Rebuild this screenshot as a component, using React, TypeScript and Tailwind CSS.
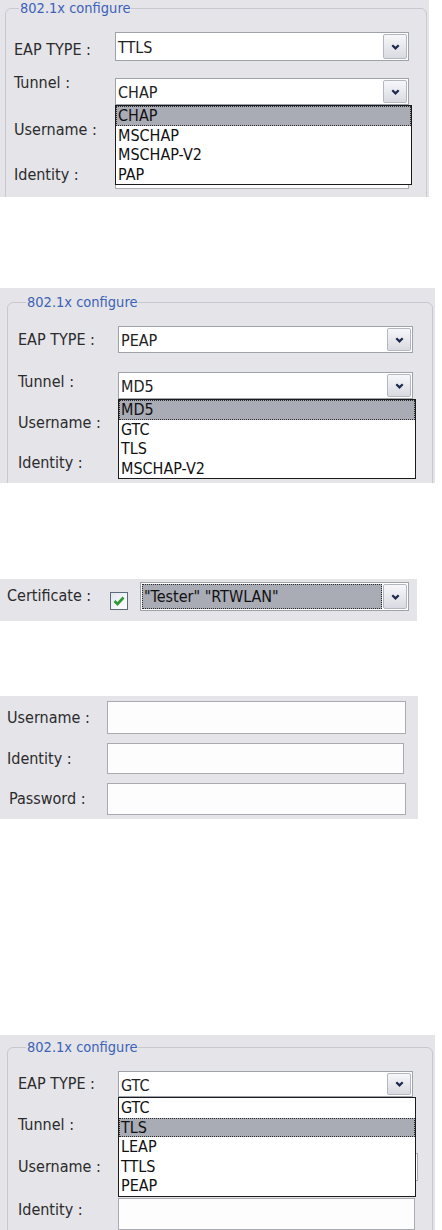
import React from "react";

const FONT = "font-['DejaVu_Sans','Liberation_Sans',sans-serif] font-stretch-condensed";

function Chevron() {
  return (
    <svg width="9" height="6" viewBox="0 0 9 6">
      <path d="M1.3 1.2 L4.5 4.4 L7.7 1.2" fill="none" stroke="#1d2a4d" strokeWidth="2.2" />
    </svg>
  );
}

function ArrowBtn() {
  return (
    <div className="w-[24px] shrink-0 my-[1px] mr-[1px] border border-[#b3b7bf] rounded-[2px] bg-linear-to-b from-[#f7f7fa] to-[#d9dbe2] flex items-center justify-center">
      <Chevron />
    </div>
  );
}

function Item({ label, hl }: { label: string; hl?: boolean }) {
  return (
    <div
      className={
        hl
          ? "h-[19.5px] leading-[18px] pl-[1px] text-[16px] text-[#111] bg-[#a9abb5] border border-dotted border-[#2a2a2a]"
          : "h-[19.5px] leading-[20px] pl-[2px] text-[16px] text-[#111]"
      }
    >
      {label}
    </div>
  );
}

function Select({
  value,
  cls,
  items,
  hlIndex,
}: {
  value: string;
  cls: string;
  items?: string[];
  hlIndex?: number;
}) {
  return (
    <div className={"relative flex border border-[#9ea3ab] bg-white " + cls}>
      <div className="flex-1 flex items-center pl-[2px] pt-[3px] text-[16px] text-[#222]">{value}</div>
      <ArrowBtn />
      {items && (
        <div className="absolute left-[-1px] top-full mt-[1px] w-[calc(100%+5px)] border border-[#1b1b1b] bg-white z-10">
          {items.map((it, i) => (
            <Item key={it} label={it} hl={i === hlIndex} />
          ))}
        </div>
      )}
    </div>
  );
}

function Input({ cls }: { cls: string }) {
  return <div className={"border border-[#a9abb1] bg-[#fdfdfd] " + cls} />;
}

function Label({ text, cls }: { text: string; cls: string }) {
  return <div className={"text-[16px] text-[#2b2b2b] whitespace-nowrap " + cls}>{text}</div>;
}

function Legend({ cls }: { cls: string }) {
  return (
    <legend className={"px-[1px] text-[14.5px] leading-[17px] text-[#3d62b8] " + cls}>802.1x configure</legend>
  );
}

export default function App() {
  return (
    <div className={"w-[442px] min-h-[1230px] bg-white flex flex-col " + FONT}>
      {/* Panel 1 */}
      <div className="w-[429px] h-[197px] bg-[#e4e4e9] overflow-hidden pl-[5px]">
        <fieldset className="w-[422px] h-[240px] border border-[#c8c9d0] rounded-[6px] pl-[8px]">
          <Legend cls="ml-[5px]" />
          <div className="flex items-center mt-[15px] h-[29px]">
            <Label text="EAP TYPE :" cls="w-[101px] mt-[7px]" />
            <Select value="TTLS" cls="w-[294px] h-[29px]" />
          </div>
          <div className="flex items-center mt-[17px] h-[27px]">
            <Label text="Tunnel :" cls="w-[101px] mb-[17px]" />
            <Select
              value="CHAP"
              cls="w-[294px] h-[27px]"
              items={["CHAP", "MSCHAP", "MSCHAP-V2", "PAP"]}
              hlIndex={0}
            />
          </div>
          <div className="flex items-center mt-[13px] h-[29px]">
            <Label text="Username :" cls="w-[101px] mb-[5px]" />
            <Input cls="w-[294px] h-[29px]" />
          </div>
          <div className="flex items-center mt-[14px] h-[28px]">
            <Label text="Identity :" cls="w-[101px]" />
            <Input cls="w-[294px] h-[28px]" />
          </div>
        </fieldset>
      </div>

      {/* Panel 2 */}
      <div className="mt-[91px] w-[435px] h-[195px] bg-[#e4e4e9] overflow-hidden pl-[7px] pt-[6px]">
        <fieldset className="w-[426px] h-[240px] border border-[#c8c9d0] rounded-[6px] pl-[10px]">
          <Legend cls="ml-[8px]" />
          <div className="flex items-center mt-[15px] h-[27px]">
            <Label text="EAP TYPE :" cls="w-[100px]" />
            <Select value="PEAP" cls="w-[295px] h-[27px]" />
          </div>
          <div className="flex items-center mt-[19px] h-[27px]">
            <Label text="Tunnel :" cls="w-[100px] mb-[7px]" />
            <Select
              value="MD5"
              cls="w-[295px] h-[27px]"
              items={["MD5", "GTC", "TLS", "MSCHAP-V2"]}
              hlIndex={0}
            />
          </div>
          <div className="flex items-center mt-[10px] h-[28px]">
            <Label text="Username :" cls="w-[100px]" />
            <Input cls="w-[295px] h-[28px]" />
          </div>
          <div className="flex items-center mt-[12px] h-[28px]">
            <Label text="Identity :" cls="w-[100px]" />
            <Input cls="w-[295px] h-[28px]" />
          </div>
        </fieldset>
      </div>

      {/* Panel 3: certificate */}
      <div className="mt-[96px] w-[417px] h-[42px] bg-[#e4e4e9] flex items-start pl-[7px]">
        <Label text="Certificate :" cls="w-[103px] mt-[5px]" />
        <div className="mt-[13px] w-[18px] h-[18px] border border-[#5d6a7e] bg-linear-to-br from-[#e3e8ee] to-[#ffffff] flex items-center justify-center">
          <svg width="12" height="10" viewBox="0 0 12 10">
            <path d="M1.5 5 L4.5 8 L10.5 1.5" fill="none" stroke="#2f9a35" strokeWidth="2.6" />
          </svg>
        </div>
        <div className="ml-[12px] mt-[3px] w-[269px] h-[29px] flex border border-[#9ea3ab] bg-white">
          <div className="flex-1 m-[1px] bg-[#a9abb5] border border-dotted border-[#2a2a2a] flex items-center pl-[1px] text-[16px] text-[#111]">
            "Tester" "RTWLAN"
          </div>
          <ArrowBtn />
        </div>
      </div>

      {/* Panel 4 */}
      <div className="mt-[75px] w-[418px] h-[123px] bg-[#e4e4e9] flex flex-col">
        <div className="flex items-center mt-[5px] h-[33px]">
          <Label text="Username :" cls="w-[107px] pl-[7px]" />
          <Input cls="w-[299px] h-[33px]" />
        </div>
        <div className="flex items-center mt-[9px] h-[31px]">
          <Label text="Identity :" cls="w-[107px] pl-[7px]" />
          <Input cls="w-[297px] h-[31px]" />
        </div>
        <div className="flex items-center mt-[9px] h-[32px]">
          <Label text="Password :" cls="w-[107px] pl-[9px]" />
          <Input cls="w-[299px] h-[32px]" />
        </div>
      </div>

      {/* Panel 5 */}
      <div className="mt-[216px] w-[435px] h-[195px] bg-[#e4e4e9] overflow-hidden pl-[7px] pt-[4px]">
        <fieldset className="w-[426px] h-[240px] border border-[#c8c9d0] rounded-[6px] pl-[10px]">
          <Legend cls="ml-[8px]" />
          <div className="flex items-center mt-[15px] h-[26px]">
            <Label text="EAP TYPE :" cls="w-[100px]" />
            <Select
              value="GTC"
              cls="w-[295px] h-[26px]"
              items={["GTC", "TLS", "LEAP", "TTLS", "PEAP"]}
              hlIndex={1}
            />
          </div>
          <div className="flex items-center mt-[14px] h-[28px]">
            <Label text="Tunnel :" cls="w-[100px]" />
            <Input cls="w-[295px] h-[28px]" />
          </div>
          <div className="flex items-center mt-[14px] h-[28px]">
            <Label text="Username :" cls="w-[100px]" />
            <Input cls="w-[300px] h-[28px]" />
          </div>
          <div className="flex items-center mt-[17px] h-[32px]">
            <Label text="Identity :" cls="w-[100px] mb-[8px]" />
            <Input cls="w-[297px] h-[32px]" />
          </div>
        </fieldset>
      </div>
    </div>
  );
}
